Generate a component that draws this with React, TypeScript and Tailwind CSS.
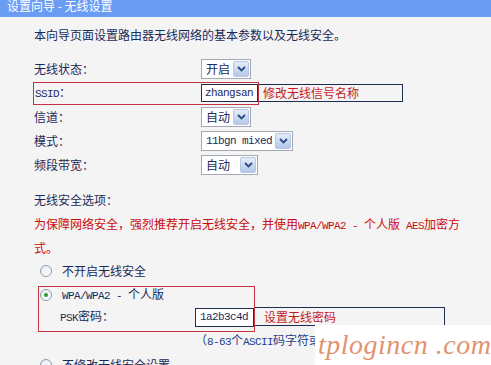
import * as React from 'react';

const CJK = "'Noto Sans CJK SC', 'Liberation Sans', sans-serif";

// ascii text in the router UI is a narrow monospaced face
const A: React.FC<{ children: React.ReactNode }> = ({ children }) => (
  <span className="font-['Liberation_Mono',monospace] text-[11px] tracking-[-0.6px]">{children}</span>
);

const Chevron = () => (
  <svg width="9" height="6" viewBox="0 0 9 6">
    <path d="M1 1 L4.5 4.5 L8 1" fill="none" stroke="#2c4a80" strokeWidth="1.8" />
  </svg>
);

const Select: React.FC<{ value: React.ReactNode; w: string }> = ({ value, w }) => (
  <div className={`flex h-[20px] ${w} items-stretch border border-[#a3aab6] bg-white`}>
    <span className="flex flex-1 items-center pl-[4px] leading-[12px]">{value}</span>
    <span className="m-[1px] flex w-[16px] items-center justify-center rounded-[2px] border border-[#b7c6df] bg-gradient-to-b from-[#e4ecf9] to-[#b4c8ea]">
      <Chevron />
    </span>
  </div>
);

const Radio: React.FC<{ checked?: boolean }> = ({ checked }) => (
  <span className="flex h-[12px] w-[12px] items-center justify-center rounded-full border border-[#8c9aab] bg-gradient-to-br from-[#e6e9ee] to-white">
    {checked && <span className="h-[4px] w-[4px] rounded-full bg-[#2f9a2f]" />}
  </span>
);

const Row: React.FC<{ label: string; children: React.ReactNode }> = ({ label, children }) => (
  <div className="flex h-[24px] items-center">
    <span className="w-[167px] leading-[12px]">{label}</span>
    {children}
  </div>
);

export default function App() {
  return (
    <div
      className="relative h-[365px] w-[491px] overflow-hidden bg-[#f4f4f4] text-[12px] text-[#1b2a58]"
      style={{ fontFamily: CJK }}
    >
      <div className="h-[17px] bg-[#6a9cf3] pl-[7px] text-[12px] leading-[11px] text-white">
        设置向导 - 无线设置
      </div>

      <div className="pl-[34px]">
        <div className="mt-[12px] leading-[12px]">本向导页面设置路由器无线网络的基本参数以及无线安全。</div>

        <div className="mt-[16px]">
          <Row label="无线状态：">
            <Select value="开启" w="w-[50px]" />
          </Row>

          <div className="-ml-[1px] flex h-[24px] items-center">
            <div className="flex h-[23px] items-center border border-[#c4333f]">
              <span className="w-[167px] pl-[1px] leading-[12px]">
                <A>SSID</A>：
              </span>
              <span className="flex h-[18px] w-[57px] items-center border border-[#1f2d50] bg-white pl-[3px]">
                <A>zhangsan</A>
              </span>
            </div>
            <span className="flex h-[18px] w-[144px] items-center border-y border-r border-[#1f2d50] pl-[4px] leading-[12px] text-[#c41a24]">
              修改无线信号名称
            </span>
          </div>

          <Row label="信道：">
            <Select value="自动" w="w-[50px]" />
          </Row>
          <Row label="模式：">
            <Select value={<A>11bgn mixed</A>} w="w-[92px]" />
          </Row>
          <Row label="频段带宽：">
            <Select value="自动" w="w-[57px]" />
          </Row>
        </div>

        <div className="mt-[17px] leading-[12px]">无线安全选项：</div>
        <div className="mt-[7px] leading-[21px] text-[#cc0a0a]">
          为保障网络安全，强烈推荐开启无线安全，并使用<A>WPA/WPA2 - </A>个人版<A> AES</A>加密方
          <br />
          式。
        </div>

        <div className="mt-[1px] ml-[6px] flex h-[24px] items-center gap-[10px]">
          <Radio />
          <span className="leading-[12px]">不开启无线安全</span>
        </div>

        <div className="mt-[3px] ml-[4px] flex items-start">
          <div className="h-[46px] w-[217px] border border-[#c4333f]">
            <div className="flex h-[16px] items-center gap-[10px] pl-[1px]">
              <Radio checked />
              <span className="leading-[12px]">
                <A>WPA/WPA2 - </A>个人版
              </span>
            </div>
            <div className="flex h-[28px] items-center pl-[21px]">
              <span className="w-[135px] leading-[12px]">
                <A>PSK</A>密码：
              </span>
              <span className="flex h-[19px] w-[59px] items-center border border-[#1f2d50] bg-white pl-[4px]">
                <A>1a2b3c4d</A>
              </span>
            </div>
          </div>
          <span className="mt-[21px] flex h-[19px] w-[190px] items-center border-y border-r border-[#1f2d50] pl-[9px] leading-[12px] text-[#c41a24]">
            设置无线密码
          </span>
        </div>

        <div className="mt-[2px] whitespace-nowrap pl-[161px] leading-[12px] text-[#1c3f8c]">
          （<A>8-63</A>个<A>ASCII</A>码字符或<A>64</A>个十六进制字符）
        </div>

        <div className="mt-[5px] ml-[6px] flex h-[24px] items-center gap-[10px]">
          <Radio />
          <span className="leading-[12px]">不修改无线安全设置</span>
        </div>
      </div>

      {/* watermark pasted over the bottom right */}
      <div className="absolute right-0 bottom-0 flex h-[40px] w-[176px] items-center bg-white pl-[3px]">
        <span className="whitespace-nowrap font-['Liberation_Serif',serif] text-[28px] italic leading-[30px] tracking-[0.5px] text-[#e2936e]">
          tplogincn .com
        </span>
      </div>
    </div>
  );
}
